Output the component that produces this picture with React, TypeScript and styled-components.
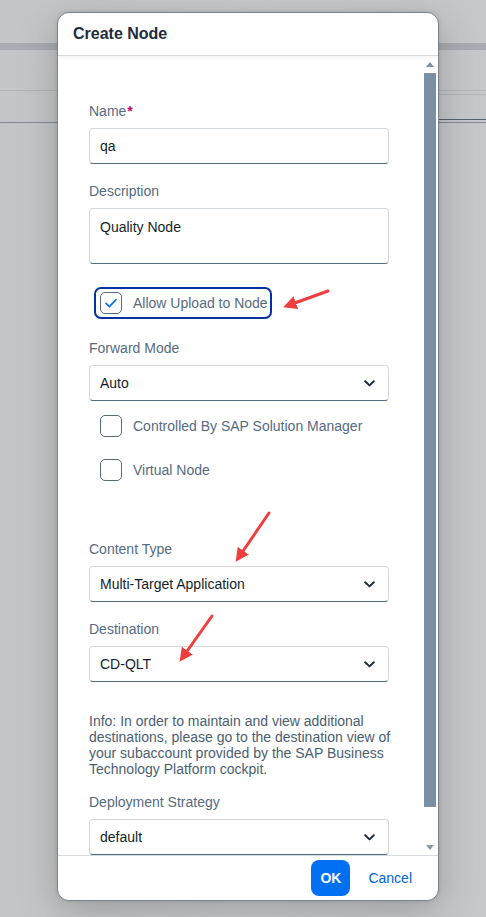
import React from 'react';
import styled, { createGlobalStyle } from 'styled-components';

const GlobalStyle = createGlobalStyle`
  html, body {
    margin: 0;
    padding: 0;
  }
  body {
    font-family: "Liberation Sans", Arial, sans-serif;
    background: #c6c7c8;
  }
`;

const Page = styled.div`
  position: relative;
  width: 486px;
  height: 917px;
  overflow: hidden;
  background: linear-gradient(90deg, #c4c5c6 0%, #c9cacb 50%, #c6c7c8 100%);
`;

const Backdrop = styled.div`
  display: flex;
  flex-direction: column;
`;

const Spacer = styled.div<{ h: number }>`
  height: ${(p) => p.h}px;
`;

const Band = styled.div`
  height: 7px;
  background: #a8acb0;
`;

const Rule = styled.div<{ color: string; half?: boolean }>`
  height: 1px;
  background: ${(p) => p.color};
  margin-left: ${(p) => (p.half ? '50%' : '0')};
`;

const Dialog = styled.div`
  position: absolute;
  left: 57px;
  top: 12px;
  width: 380px;
  height: 887px;
  background: #fff;
  border: 1px solid #7a8591;
  border-radius: 12px;
  box-shadow: 0 10px 40px rgba(0, 0, 0, 0.22), 0 0 4px rgba(0, 0, 0, 0.12);
  display: flex;
  flex-direction: column;
  overflow: hidden;
`;

const Header = styled.div`
  height: 42px;
  flex: none;
  display: flex;
  align-items: center;
  padding-left: 15px;
  border-bottom: 1px solid #d9dcdf;
  box-shadow: 0 2px 4px rgba(0, 0, 0, 0.05);
  position: relative;
  z-index: 1;
`;

const Title = styled.h1`
  margin: 0;
  font-size: 16px;
  font-weight: 700;
  color: #1d2d3e;
`;

const Body = styled.div`
  flex: 1;
  display: flex;
  min-height: 0;
`;

const Content = styled.div`
  flex: 1;
  overflow: hidden;
  padding: 46px 0 0 31px;
  display: flex;
  flex-direction: column;
`;

const Field = styled.div<{ mt?: number }>`
  display: flex;
  flex-direction: column;
  gap: 8px;
  width: 300px;
  margin-top: ${(p) => p.mt ?? 0}px;
`;

const Label = styled.label`
  font-size: 14px;
  line-height: 18px;
  color: #556b82;
`;

const Required = styled.span`
  color: #ba066c;
  font-weight: 700;
  margin-left: 1px;
`;

const Input = styled.div<{ tall?: boolean }>`
  box-sizing: border-box;
  height: ${(p) => (p.tall ? 56 : 36)}px;
  border: 1px solid #d3d8dd;
  border-bottom-color: #556b82;
  border-radius: 4px;
  padding: ${(p) => (p.tall ? '9px 10px' : '0 10px')};
  display: flex;
  align-items: ${(p) => (p.tall ? 'flex-start' : 'center')};
  justify-content: space-between;
  font-size: 14px;
  line-height: 18px;
  color: #131e29;
  background: #fff;
`;

const Chevron = styled.svg`
  width: 11px;
  height: 7px;
  margin-right: 3px;
`;

const CheckRow = styled.div<{ focused?: boolean; h?: number; mt?: number }>`
  box-sizing: border-box;
  display: inline-flex;
  align-self: flex-start;
  align-items: center;
  gap: 11px;
  height: ${(p) => p.h ?? 32}px;
  margin: ${(p) => p.mt ?? 0}px 0 0 5px;
  padding: 0 2px 0 4px;
  border: 2px solid ${(p) => (p.focused ? '#0032a5' : 'transparent')};
  border-radius: 7px;
`;

const Box = styled.span`
  box-sizing: border-box;
  width: 22px;
  height: 22px;
  border: 1px solid #556b82;
  border-radius: 5px;
  display: flex;
  align-items: center;
  justify-content: center;
  background: #fff;
`;

const CheckText = styled.span`
  font-size: 14px;
  color: #556b82;
`;

const Info = styled.p`
  width: 310px;
  margin: 31px 0 0;
  font-size: 14px;
  line-height: 16px;
  color: #4b5e71;
`;

const Scrollbar = styled.div`
  width: 16px;
  flex: none;
  display: flex;
  flex-direction: column;
  align-items: center;
`;

const ArrowSlot = styled.div<{ h: number }>`
  height: ${(p) => p.h}px;
  display: flex;
  align-items: center;
  justify-content: center;
  flex: none;
`;

const Thumb = styled.div`
  width: 12px;
  height: 734px;
  margin-left: -1px;
  background: #7b8fa5;
  flex: none;
`;

const Track = styled.div`
  flex: 1;
`;

const Footer = styled.div`
  height: 44px;
  flex: none;
  border-top: 1px solid #d9dcdf;
  display: flex;
  align-items: center;
  justify-content: flex-end;
  gap: 8px;
  padding-right: 16px;
`;

const OkButton = styled.button`
  width: 39px;
  height: 36px;
  border: none;
  border-radius: 8px;
  background: #0070f2;
  color: #fff;
  font-family: inherit;
  font-size: 14px;
  font-weight: 700;
  padding: 0;
`;

const CancelButton = styled.button`
  height: 36px;
  border: none;
  background: transparent;
  color: #0064d9;
  font-family: inherit;
  font-size: 14px;
  padding: 0 10px;
`;

const Annotations = styled.svg`
  position: absolute;
  left: 0;
  top: 0;
  pointer-events: none;
`;

const ChevronDown = () => (
  <Chevron viewBox="0 0 11 7">
    <path d="M1.2 1.2 L5.5 5.4 L9.8 1.2" fill="none" stroke="#1d2d3e" strokeWidth="2" strokeLinecap="round" strokeLinejoin="round" />
  </Chevron>
);

const Select = ({ value }: { value: string }) => (
  <Input>
    <span>{value}</span>
    <ChevronDown />
  </Input>
);

const Tick = () => (
  <svg width="14" height="12" viewBox="0 0 14 12">
    <path d="M2 6.4 L5.4 9.6 L12 2.6" fill="none" stroke="#0070f2" strokeWidth="1.6" strokeLinecap="round" strokeLinejoin="round" />
  </svg>
);

const Arrow = ({ x1, y1, x2, y2 }: { x1: number; y1: number; x2: number; y2: number }) => (
  <line x1={x1} y1={y1} x2={x2} y2={y2} stroke="#f03d3d" strokeWidth="3" strokeLinecap="round" markerEnd="url(#head)" />
);

export default function App() {
  return (
    <Page>
      <GlobalStyle />
      <Backdrop>
        <Spacer h={43} />
        <Band />
        <Spacer h={40} />
        <Rule color="#b1b5b9" />
        <Spacer h={3} />
        <Rule color="#b1b5b9" half />
        <Spacer h={24} />
        <Rule color="#56616d" half />
        <Spacer h={2} />
        <Rule color="#7f8995" />
      </Backdrop>

      <Dialog>
        <Header>
          <Title>Create Node</Title>
        </Header>
        <Body>
          <Content>
            <Field>
              <Label>
                Name<Required>*</Required>
              </Label>
              <Input>qa</Input>
            </Field>
            <Field mt={18}>
              <Label>Description</Label>
              <Input tall>Quality Node</Input>
            </Field>
            <CheckRow focused mt={23}>
              <Box>
                <Tick />
              </Box>
              <CheckText>Allow Upload to Node</CheckText>
            </CheckRow>
            <Field mt={20}>
              <Label>Forward Mode</Label>
              <Select value="Auto" />
            </Field>
            <CheckRow h={44} mt={3}>
              <Box />
              <CheckText>Controlled By SAP Solution Manager</CheckText>
            </CheckRow>
            <CheckRow h={44}>
              <Box />
              <CheckText>Virtual Node</CheckText>
            </CheckRow>
            <Field mt={48}>
              <Label>Content Type</Label>
              <Select value="Multi-Target Application" />
            </Field>
            <Field mt={18}>
              <Label>Destination</Label>
              <Select value="CD-QLT" />
            </Field>
            <Info>
              Info: In order to maintain and view additional destinations, please go to the destination view of
              your subaccount provided by the SAP Business Technology Platform cockpit.
            </Info>
            <Field mt={16}>
              <Label>Deployment Strategy</Label>
              <Select value="default" />
            </Field>
          </Content>
          <Scrollbar>
            <ArrowSlot h={17}>
              <svg width="8" height="5" viewBox="0 0 8 5">
                <path d="M0 5 L4 0 L8 5 Z" fill="#7b8fa5" />
              </svg>
            </ArrowSlot>
            <Thumb />
            <Track />
            <ArrowSlot h={16}>
              <svg width="8" height="5" viewBox="0 0 8 5">
                <path d="M0 0 L8 0 L4 5 Z" fill="#8c9aaa" />
              </svg>
            </ArrowSlot>
          </Scrollbar>
        </Body>
        <Footer>
          <OkButton>OK</OkButton>
          <CancelButton>Cancel</CancelButton>
        </Footer>
      </Dialog>

      <Annotations width="486" height="917" viewBox="0 0 486 917">
        <defs>
          <marker id="head" viewBox="0 0 10 10" refX="3" refY="5" markerWidth="4.5" markerHeight="4.5" orient="auto">
            <path d="M0 0 L10 5 L0 10 Z" fill="#f03d3d" />
          </marker>
        </defs>
        <Arrow x1={328} y1={291} x2={292} y2={304} />
        <Arrow x1={269} y1={513} x2={241} y2={554} />
        <Arrow x1={212} y1={616} x2={185} y2={654} />
      </Annotations>
    </Page>
  );
}
